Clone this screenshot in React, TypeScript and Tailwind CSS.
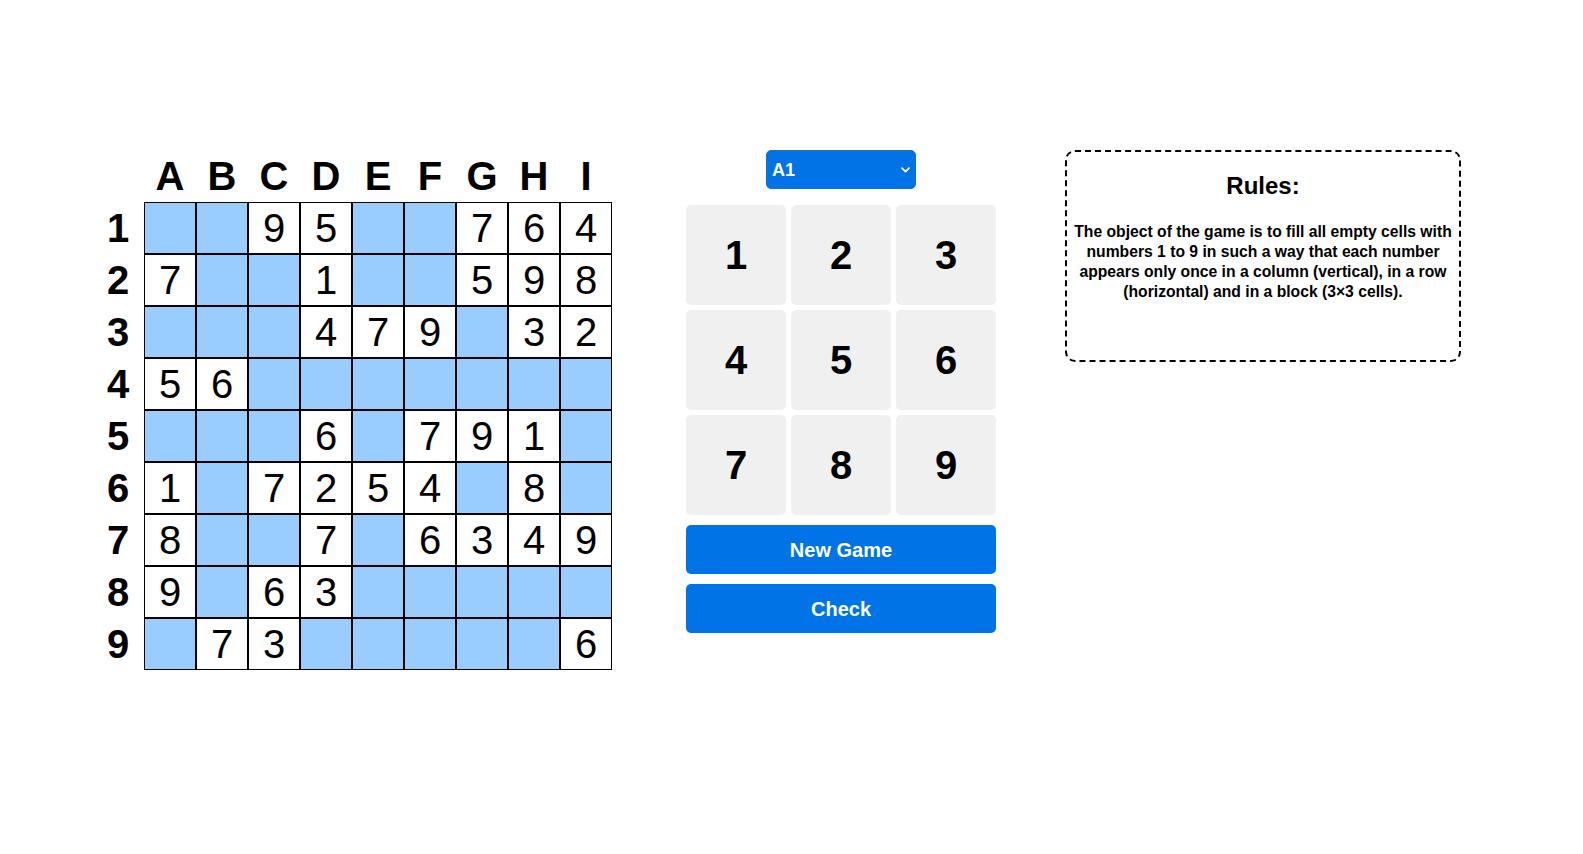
import { Fragment } from 'react';

const letters = ['A', 'B', 'C', 'D', 'E', 'F', 'G', 'H', 'I'];

const board = [
  [0, 0, 9, 5, 0, 0, 7, 6, 4],
  [7, 0, 0, 1, 0, 0, 5, 9, 8],
  [0, 0, 0, 4, 7, 9, 0, 3, 2],
  [5, 6, 0, 0, 0, 0, 0, 0, 0],
  [0, 0, 0, 6, 0, 7, 9, 1, 0],
  [1, 0, 7, 2, 5, 4, 0, 8, 0],
  [8, 0, 0, 7, 0, 6, 3, 4, 9],
  [9, 0, 6, 3, 0, 0, 0, 0, 0],
  [0, 7, 3, 0, 0, 0, 0, 0, 6],
];

export default function App() {
  return (
    <div className="flex items-start pt-[150px] pl-[92px] bg-white min-h-screen font-['Liberation_Sans',Arial,sans-serif] text-black">
      {/* Board */}
      <div className="grid grid-cols-[repeat(10,52px)] shrink-0">
        <div className="h-[52px]" />
        {letters.map((l) => (
          <div key={l} className="h-[52px] flex items-center justify-center text-[40px] leading-[50px] font-bold">
            {l}
          </div>
        ))}
        {board.map((row, r) => (
          <Fragment key={r}>
            <div className="h-[52px] flex items-center justify-center text-[40px] leading-[50px] font-bold">
              {r + 1}
            </div>
            {row.map((v, c) => (
              <div
                key={c}
                className={
                  'h-[52px] border border-black flex items-center justify-center text-[40px] leading-[50px] ' +
                  (v ? 'bg-white' : 'bg-[#99ccff]')
                }
              >
                {v || ''}
              </div>
            ))}
          </Fragment>
        ))}
      </div>

      {/* Controls */}
      <div className="ml-[74px] w-[310px] shrink-0 flex flex-col">
        <div className="relative mx-auto w-[150px]">
          <select className="appearance-none w-full h-[39px] rounded-[5px] bg-[#0073e6] text-white font-bold text-[18px] leading-[22px] pl-[5px] border border-[#1a6fc9] outline-none">
            {letters.flatMap((l) =>
              [1, 2, 3, 4, 5, 6, 7, 8, 9].map((n) => (
                <option key={`${l}${n}`} value={`${l}${n}`}>
                  {l}
                  {n}
                </option>
              ))
            )}
          </select>
          <svg className="absolute right-[6px] top-[17px] w-[9px] h-[6px] pointer-events-none" viewBox="0 0 9 6" fill="none">
            <path d="M1 1.2 L4.5 4.6 L8 1.2" stroke="white" strokeWidth="1.8" strokeLinecap="round" strokeLinejoin="round" />
          </svg>
        </div>

        <div className="mt-[16px] grid grid-cols-3 gap-[5px]">
          {[1, 2, 3, 4, 5, 6, 7, 8, 9].map((n) => (
            <button key={n} className="aspect-square rounded-[5px] bg-[#f0f0f0] text-[40px] leading-none font-bold flex items-center justify-center">
              {n}
            </button>
          ))}
        </div>

        <button className="mt-[10px] h-[49px] rounded-[5px] bg-[#0073e6] text-white font-bold text-[20px] leading-6">
          New Game
        </button>
        <button className="mt-[10px] h-[49px] rounded-[5px] bg-[#0073e6] text-white font-bold text-[20px] leading-6">
          Check
        </button>
      </div>

      {/* Rules */}
      <div className="ml-[69px] w-[396px] h-[212px] shrink-0 border-2 border-dashed border-black rounded-[10px] pt-[20px] px-[5px] text-center">
        <h3 className="text-[24px] leading-[28px] font-bold">Rules:</h3>
        <p className="mt-[22px] text-[15.7px] leading-[20px] font-bold">
          The object of the game is to fill all empty cells with numbers 1 to 9 in such a way that each number appears only once in a column (vertical), in a row (horizontal) and in a block (3×3 cells).
        </p>
      </div>
    </div>
  );
}
